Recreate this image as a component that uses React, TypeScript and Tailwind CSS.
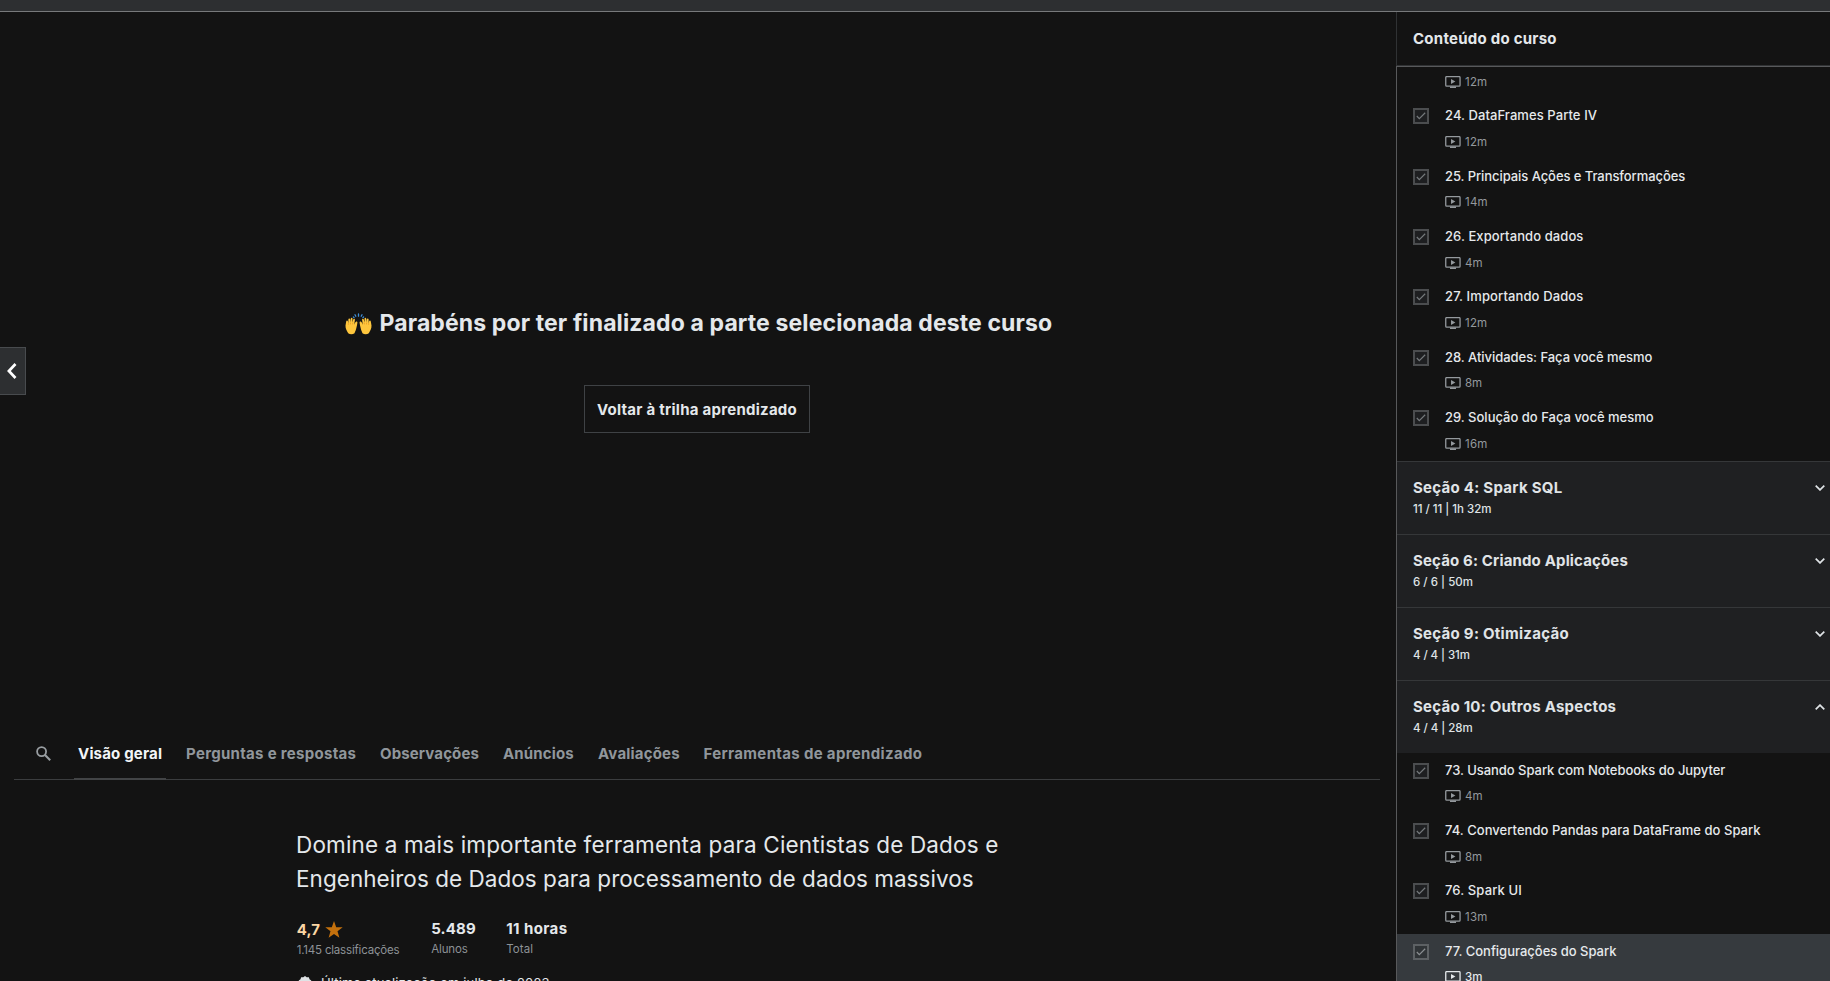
import React from 'react';
import clsx from 'clsx';

type Lecture = { title: string; tracking: string; time: string; active?: boolean };
type Section = { title: string; tracking: string; info: string; infoTracking: string; open?: boolean };

const firstLectures: Lecture[] = [
  { title: '24. DataFrames Parte IV', tracking: 'tracking-[0.08px]', time: '12m' },
  { title: '25. Principais Ações e Transformações', tracking: 'tracking-[-0.07px]', time: '14m' },
  { title: '26. Exportando dados', tracking: 'tracking-[0.09px]', time: '4m' },
  { title: '27. Importando Dados', tracking: 'tracking-[0.12px]', time: '12m' },
  { title: '28. Atividades: Faça você mesmo', tracking: 'tracking-[-0.04px]', time: '8m' },
  { title: '29. Solução do Faça você mesmo', tracking: 'tracking-normal', time: '16m' },
];

const sections: Section[] = [
  { title: 'Seção 4: Spark SQL', tracking: 'tracking-[0.27px]', info: '11 / 11 | 1h 32m', infoTracking: 'tracking-[-0.03px]' },
  { title: 'Seção 6: Criando Aplicações', tracking: 'tracking-[0.15px]', info: '6 / 6 | 50m', infoTracking: 'tracking-[0.02px]' },
  { title: 'Seção 9: Otimização', tracking: 'tracking-[0.28px]', info: '4 / 4 | 31m', infoTracking: 'tracking-[-0.08px]' },
  { title: 'Seção 10: Outros Aspectos', tracking: 'tracking-[0.24px]', info: '4 / 4 | 28m', infoTracking: 'tracking-[-0.05px]', open: true },
];

const lastLectures: Lecture[] = [
  { title: '73. Usando Spark com Notebooks do Jupyter', tracking: 'tracking-[-0.04px]', time: '4m' },
  { title: '74. Convertendo Pandas para DataFrame do Spark', tracking: 'tracking-[0.04px]', time: '8m' },
  { title: '76. Spark UI', tracking: 'tracking-[0.14px]', time: '13m' },
  { title: '77. Configurações do Spark', tracking: 'tracking-[-0.01px]', time: '3m', active: true },
];

const tabs = [
  { label: 'Visão geral', box: 'w-[108px]', tracking: 'tracking-[0.18px]' },
  { label: 'Perguntas e respostas', box: 'w-[194px]', tracking: 'tracking-[0.3px]' },
  { label: 'Observações', box: 'w-[123px]', tracking: 'tracking-[0.13px]' },
  { label: 'Anúncios', box: 'w-[95px]', tracking: 'tracking-[0.13px]' },
  { label: 'Avaliações', box: 'w-[105.5px]', tracking: 'tracking-[0.19px]' },
  { label: 'Ferramentas de aprendizado', box: 'w-[240px]', tracking: 'tracking-[0.34px]' },
];

function PlayIcon() {
  return (
    <svg width="16" height="12" viewBox="0 0 16 12" className="shrink-0" fill="none">
      <rect x="0.75" y="0.6" width="14.3" height="9.6" rx="0.9" stroke="currentColor" strokeWidth="1.3" />
      <path d="M5 10.5h6V12H5z" fill="currentColor" />
      <path d="M6 3v5l4.400-2.500z" fill="currentColor" />
    </svg>
  );
}

function Chevron({ up }: { up?: boolean }) {
  return (
    <svg width="10" height="6" viewBox="0 0 10 6" className="mt-[9px] shrink-0" fill="none" stroke="#dfe3e6" strokeWidth="1.7">
      <path d={up ? 'M0.7 5.3 5 1.1l4.3 4.2' : 'M0.7 0.7 5 4.9 9.3 0.7'} />
    </svg>
  );
}

function Meta({ time, active }: { time: string; active?: boolean }) {
  return (
    <div
      className={clsx(
        'flex h-[18px] items-center gap-1 text-[11.5px]/[18px]',
        active ? 'font-medium text-[#e4e8eb]' : 'text-[#94999d]',
      )}
    >
      <PlayIcon />
      <span className={time.length === 2 ? 'tracking-normal' : 'tracking-[0.2px]'}>{time}</span>
    </div>
  );
}

function LectureRow({ title, tracking, time, active }: Lecture) {
  return (
    <div className={clsx('flex h-[60.4px] shrink-0 gap-4 pl-4', active && 'bg-[#363a3e]')}>
      <div
        className={clsx(
          'mt-[9.6px] flex size-4 shrink-0 items-center justify-center border-2',
          active ? 'border-[#5d6164] bg-[#303437]' : 'border-[#4b4d4f] bg-[#1e1f21]',
        )}
      >
        <svg width="10" height="8" viewBox="0 0 10 8" fill="none" stroke={active ? '#8b8f92' : '#75797c'} strokeWidth="1.2">
          <path d="M0.8 4 3.3 6.6 9.2 0.8" />
        </svg>
      </div>
      <div className="pt-[6.6px]">
        <div className={clsx('text-[13px]/5 font-medium whitespace-nowrap text-[#e6e9ec]', tracking)}>{title}</div>
        <div className="pt-[7.7px]">
          <Meta time={time} active={active} />
        </div>
      </div>
    </div>
  );
}

function SectionHeader({ title, tracking, info, infoTracking, open }: Section) {
  return (
    <div className="flex h-[73px] shrink-0 justify-between border-t border-[#353739] bg-[#1f2022] pt-[14.5px] pr-[5px] pl-4">
      <div>
        <div className={clsx('pt-[0.7px] text-[15px]/[22px] font-bold text-[#e0e4e7]', tracking)}>{title}</div>
        <div className={clsx('mt-[0.8px] text-[11.5px]/[18px] font-medium text-[#dfe3e6]', infoTracking)}>{info}</div>
      </div>
      <Chevron up={open} />
    </div>
  );
}

function Hand() {
  return (
    <>
      <path
        d="M1.2 8.4c0-1 1.5-1.1 1.7-.1l.4 2.1.1-4.2c0-1.1 1.7-1.1 1.8 0l.2 3.3.4-4c.1-1 1.7-1 1.7.1l-.1 4 .9-3.3c.3-1 1.8-.6 1.6.4l-.7 5c.4-1 .9-2.4 1.8-3 .8-.4 1.500.2 1.400 1.100-.3 1.900-.6 4.200-1.300 6.300-.6 2.100-1.300 3.200-1.600 4.100-1.700 1.500-4.600 1.500-6.300 0C2 18 .3 15.800.5 12.500z"
        fill="#fec63d"
      />
      <path d="M3.400 10.200v1.600M5.500 9.700v1.700M7.800 9.700l-.2 1.700" stroke="#e99a24" strokeWidth=".8" />
    </>
  );
}

function RaisedHands() {
  return (
    <svg width="27" height="22" viewBox="0 0 27 22" className="mt-[6px] shrink-0">
      <path
        d="M13.500 1v2.200M10 1.700l.8 1.500M17 1.700l-.8 1.500M8.400 4l.6.500M18.600 4l-.6.500"
        stroke="#3f8fd8"
        strokeWidth="1.3"
        strokeLinecap="round"
      />
      <Hand />
      <g transform="matrix(-1 0 0 1 27 0)">
        <Hand />
      </g>
    </svg>
  );
}

export default function App() {
  return (
    <div className="flex h-[981px] w-[1830px] flex-col overflow-hidden bg-[#131313] font-['Inter',sans-serif]">
      <div className="h-3 shrink-0 border-b border-[#77797b] bg-[#2d2f31]" />
      <div className="flex min-h-0 flex-1">
        <main className="relative flex w-[1396px] shrink-0 flex-col">
          <button
            aria-label="Anterior"
            className="absolute top-[335px] left-0 flex h-12 w-[26px] items-center border border-l-0 border-[#484b4e] bg-[#2d2f31] pl-[7px]"
          >
            <svg width="10" height="16" viewBox="0 0 10 16" fill="none" stroke="#fff" strokeWidth="2.7">
              <path d="M8.5 1 1.9 8l6.6 7" />
            </svg>
          </button>

          <div className="flex shrink-0 gap-2 pt-[294.6px] pl-[344.5px]">
            <RaisedHands />
            <h2 className="text-[23px]/[32px] font-bold tracking-[0.12px] whitespace-nowrap text-[#e4e8eb]">
              Parabéns por ter finalizado a parte selecionada deste curso
            </h2>
          </div>
          <button className="mt-[46.4px] ml-[584px] h-12 w-[226px] shrink-0 border border-[#3f4245] pt-[2px] text-[15px] font-bold tracking-[0.26px] whitespace-nowrap text-[#e4e8eb]">
            Voltar à trilha aprendizado
          </button>

          <nav className="mt-[295px] ml-[14px] flex h-[52px] w-[1366px] shrink-0 border-b border-[#3b3d3f]">
            <div className="w-16 pt-[18px] pl-[22px]">
              <svg width="15" height="15" viewBox="0 0 15 15" fill="none" stroke="#999ea2" strokeWidth="1.8">
                <circle cx="5.6" cy="5.6" r="4.500" />
                <path d="m9 9 5.200 5.200" strokeWidth="2.1" />
              </svg>
            </div>
            {tabs.map((t, i) => (
              <div
                key={t.label}
                className={clsx(
                  'shrink-0 text-[15px]/[51px] font-bold whitespace-nowrap',
                  t.box,
                  t.tracking,
                  i === 0 ? 'text-[#f2f5f7]' : 'text-[#90969b]',
                )}
              >
                {i === 0 ? <div className="-ml-1 h-[52px] w-[92px] border-b-2 border-[#424446] pl-1">{t.label}</div> : t.label}
              </div>
            ))}
          </nav>

          <section className="shrink-0 pt-[47.8px] pl-[296px] text-[#e4e8eb]">
            <p className="text-[22.5px]/[34px] whitespace-nowrap">
              <span className="block tracking-[0.15px]">Domine a mais importante ferramenta para Cientistas de Dados e</span>
              <span className="block tracking-[0.04px]">Engenheiros de Dados para processamento de dados massivos</span>
            </p>
            <div className="flex pt-[22.200px] pl-[0.7px] text-[11.5px]/[18px] text-[#8d9296]">
              <div className="w-[134.500px] pt-[1.500px]">
                <div className="flex h-[22px] gap-[5px]">
                  <span className="text-[15px]/[22px] font-bold tracking-[0.15px] text-[#fbd6a4]">4,7</span>
                  <svg width="18" height="17" viewBox="0 0 18 17" className="mt-[2px]" fill="#c4710d">
                    <path d="m9 0 2.200 6.200H17.700l-5.200 4 1.900 6.500L9 12.900l-5.400 3.800 1.900-6.500-5.200-4h6.500z" />
                  </svg>
                </div>
                <div className="tracking-[-0.19px]">1.145 classificações</div>
              </div>
              <div className="w-[75px]">
                <div className="pt-[0.5px] text-[15px]/[22px] font-bold tracking-[0.18px] text-[#e4e8eb]">5.489</div>
                <div className="tracking-[-0.13px]">Alunos</div>
              </div>
              <div>
                <div className="pt-[0.5px] text-[15px]/[22px] font-bold tracking-[0.41px] text-[#e4e8eb]">11 horas</div>
                <div className="tracking-[0.1px]">Total</div>
              </div>
            </div>
            <div className="flex gap-[10px] pt-[13.500px] pl-[2px] text-[13px]/5">
              <svg width="14" height="14" viewBox="0 0 14 14" className="mt-[3px] shrink-0" fill="#dfe3e6">
                <path d="m7 0 1.700 1.300 2.200-.1.600 2.100 1.800 1.200L12.600 7l.7 2.500-1.800 1.200-.6 2.100-2.200-.1L7 14l-1.700-1.300-2.200.1-.6-2.100-1.800-1.200L1.400 7 .7 4.500l1.800-1.200.6-2.100 2.200.1z" />
              </svg>
              <span className="-ml-px tracking-[0.15px] whitespace-nowrap">Última atualização em julho de 2023</span>
            </div>
          </section>
        </main>

        <aside className="flex min-w-0 flex-1 flex-col">
          <header className="flex h-[54px] shrink-0 items-center border-b border-l border-[#303234] pl-4">
            <h2 className="text-[15px]/[22px] font-bold tracking-[0.25px] text-[#e4e8eb]">Conteúdo do curso</h2>
          </header>
          <div className="flex min-h-0 flex-1 flex-col overflow-hidden border-t border-l border-[#58595b]">
            <div className="flex h-[31.6px] shrink-0 items-start pt-[5.5px] pl-12">
              <Meta time="12m" />
            </div>
            {firstLectures.map((l) => (
              <LectureRow key={l.title} {...l} />
            ))}
            {sections.map((s) => (
              <SectionHeader key={s.title} {...s} />
            ))}
            {lastLectures.map((l) => (
              <LectureRow key={l.title} {...l} />
            ))}
          </div>
        </aside>
      </div>
    </div>
  );
}
